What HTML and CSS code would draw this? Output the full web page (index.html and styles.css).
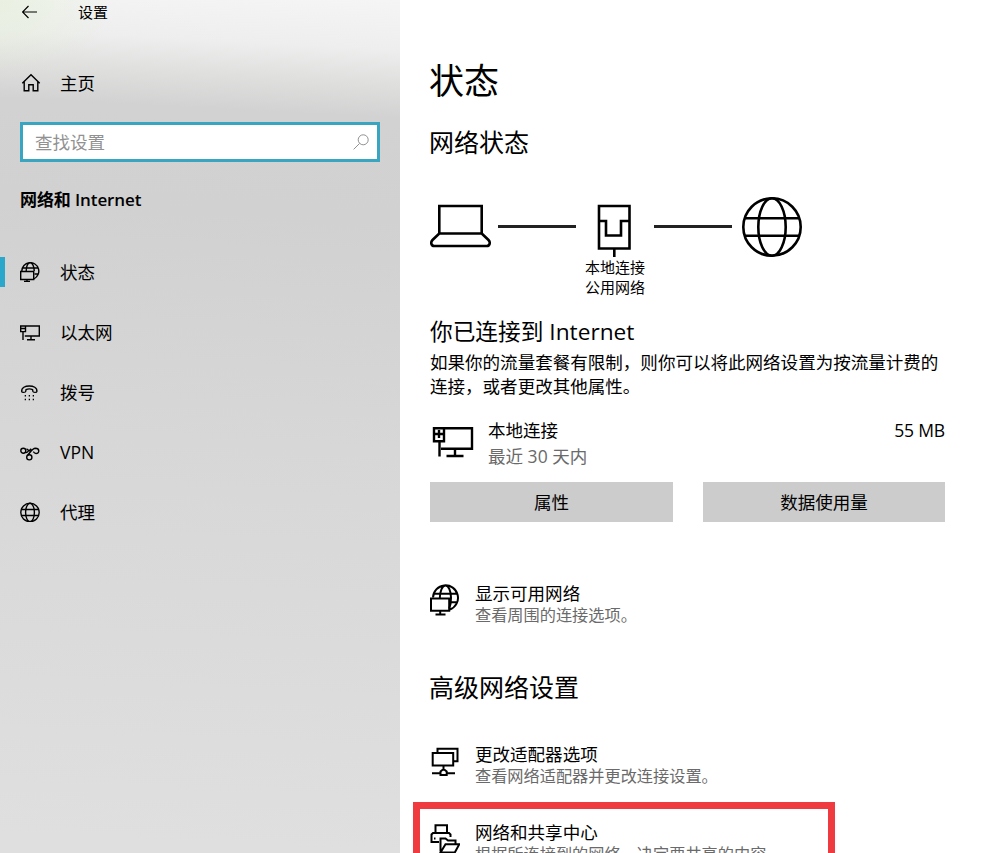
FILE: index.html
```html
<!DOCTYPE html>
<html lang="zh-CN">
<head>
  <meta charset="UTF-8">
  <meta name="viewport" content="width=device-width, initial-scale=1.0">
  <title>设置</title>
  <link rel="stylesheet" href="styles.css">
</head>
<body>
  <aside class="sidebar">
    <header class="titlebar">
      <svg class="back" width="16" height="14" viewBox="0 0 16 14"><path d="M15 7H.5M6.500 1L.5 7l6 6"/></svg>
      <span>设置</span>
    </header>

    <a class="home">
      <svg width="20" height="20" viewBox="0 0 20 20"><path d="M1.300 10.200L10 1.700l8.700 8.500M3.200 8.600v9.200h4.600v-6h4.400v6h4.600V8.600"/></svg>
      <span>主页</span>
    </a>

    <div class="search">
      <span>查找设置</span>
      <svg width="16" height="16" viewBox="0 0 16 16"><circle cx="10.200" cy="5.800" r="5"/><path d="M6.600 9.400L.6 15.400"/></svg>
    </div>

    <h2 class="category">网络和 Internet</h2>

    <nav class="nav">
      <a class="nav-item active">
        <svg width="20" height="20" viewBox="0 0 20 20"><path d="M1.800 9A8.500 8.500 0 1 1 14 16.800M2.500 6h15.600M14.500 12h3.800M6.200 9C6.400 4 8 .8 10.200.8s4 3.600 4 8.200"/><path d="M.7 9.500h13v8H.7zM7 17.500v2.300M4 19.500h6"/></svg>
        <span>状态</span>
      </a>
      <a class="nav-item">
        <svg width="20" height="20" viewBox="0 0 20 20"><path d="M5.500 4h13.800v10H4.800M.7 4h4.800v5.600H.7zM.7 6.500h4.800M3 9.600V18M11 14v3.500M7 17.800h8"/></svg>
        <span>以太网</span>
      </a>
      <a class="nav-item">
        <svg width="20" height="20" viewBox="0 0 20 20"><path d="M1.700 9.500C1.300 5.500 5.300 4 9.300 4s8 1.500 7.600 5.500c-.1 1.200-3.800 1.200-4 0l-.3-1.800c-1.600-.8-5-.8-6.600 0l-.3 1.800c-.2 1.200-3.900 1.200-4 0z"/><path class="dots" d="M4.700 13.700h1.300M8.700 13.700H10M12.700 13.700H14M4.700 17.500h1.300M8.700 17.500H10M12.700 17.500H14"/></svg>
        <span>拨号</span>
      </a>
      <a class="nav-item">
        <svg width="20" height="20" viewBox="0 0 20 20"><circle cx="3.300" cy="8.800" r="2.500"/><circle cx="9.300" cy="15.300" r="2.600"/><path d="M5.300 10.300c1.700 1.200 2.500-.6 3.800-2.200M6.500 6.800l2.700 2 2-2M7.600 13.200c2.400-2 4.200-6.800 7.800-6.900 4.400 0 4.400 5.200.6 5.200-1.200 0-2-.8-2.700-1.800"/></svg>
        <span>VPN</span>
      </a>
      <a class="nav-item">
        <svg width="20" height="20" viewBox="0 0 20 20"><circle cx="10" cy="10.500" r="9.200"/><ellipse cx="10" cy="10.500" rx="4.400" ry="9.200"/><path d="M1.300 7.500h17.400M1.300 13.500h17.400"/></svg>
        <span>代理</span>
      </a>
    </nav>
  </aside>

  <main class="content">
    <h1>状态</h1>
    <h2>网络状态</h2>

    <div class="diagram">
      <svg class="laptop" width="62" height="60" viewBox="0 0 62 60"><path d="M9.300 9h42.400v27.500H9.300zM9.300 36.500L2.500 43c-2.400 2.600-1 6 1.700 6h52.600c2.700 0 4.100-3.400 1.700-6l-6.800-6.500"/></svg>
      <span class="line"></span>
      <div class="adapter">
        <svg width="36" height="60" viewBox="0 0 36 60"><path d="M2 9h30.500v42.500H2zM2 24h7v14.500h15V24h8.500M17.300 51.500V60"/></svg>
        <span>本地连接</span>
        <span>公用网络</span>
      </div>
      <span class="line"></span>
      <svg class="globe" width="60" height="60" viewBox="0 0 60 60"><circle cx="30" cy="30" r="28.700"/><ellipse cx="30" cy="30" rx="13.700" ry="28.700"/><path d="M3 21.300h54M3 38.800h54"/></svg>
    </div>

    <h3>你已连接到 Internet</h3>
    <p class="intro">如果你的流量套餐有限制，则你可以将此网络设置为按流量计费的连接，或者更改其他属性。</p>

    <div class="connection">
      <svg width="42" height="34" viewBox="0 0 42 34"><path d="M12 2.300h28v20.500H9M2 2.300h10v13H2zM2 8h10M7 4v8M7.500 16v14.500M23 23v6.500M14.500 30h17"/></svg>
      <div class="connection-text">
        <span>本地连接</span>
        <span class="muted">最近 30 天内</span>
      </div>
      <span class="usage">55 MB</span>
    </div>

    <div class="buttons">
      <button class="btn">属性</button>
      <button class="btn">数据使用量</button>
    </div>

    <a class="option">
      <svg width="30" height="32" viewBox="0 0 30 32"><path d="M3 13.500a12.500 12.500 0 1 1 17 12M3.700 9.700h23.600M20 18.200h7.200M9.800 14.500C9.800 7 12.500 1.500 15.500 1.500S21 7 21 13.700c0 4-.5 8-1.800 11"/><path d="M1 14.500h18.200v12.300H1zM10.200 27v4M5.500 30.500h10"/></svg>
      <div class="option-text">
        <span>显示可用网络</span>
        <small>查看周围的连接选项。</small>
      </div>
    </a>

    <h2 class="advanced">高级网络设置</h2>

    <a class="option">
      <svg width="30" height="32" viewBox="0 0 30 32"><path d="M7.500 7.500V3.700h20v12.500h-4M2.700 8h20.500v12.500H2.700zM13.500 20.500V24M2 28.300h8.200M17 28.300h8M10.500 26.500l3-2.500 3.200 2.500V30h-6.200z"/></svg>
      <div class="option-text">
        <span>更改适配器选项</span>
        <small>查看网络适配器并更改连接设置。</small>
      </div>
    </a>
    <a class="option sharing">
      <svg width="30" height="32" viewBox="0 0 30 32"><path d="M5.500 10V2.300h11.500V10M9 19H1.500v-7.500L3 10h16l1.500 1.500V14M4 15.500h1.500M10.500 28.500v-13h5l2.500 2h7.500V21M10.500 29.500l5-8.200h13.800l-4.500 8.200z"/></svg>
      <div class="option-text">
        <span>网络和共享中心</span>
        <small>根据所连接到的网络，决定要共享的内容。</small>
      </div>
    </a>
    <div class="highlight"></div>
  </main>
</body>
</html>
```
FILE: styles.css
```css
* {
  box-sizing: border-box;
}
body {
  display: flex;
  height: 853px;
  margin: 0;
  overflow: hidden;
  background: #fff;
  color: #000;
  font-family: "Open Sans", "Noto Sans CJK SC", sans-serif;
  font-size: 17.55px;
  line-height: 24px;
}
h1, h2, h3, p {
  margin: 0;
  font-weight: normal;
}
svg {
  flex: none;
  fill: none;
  stroke: #000;
  stroke-width: 1.4;
}

/* sidebar */
.sidebar {
  width: 400px;
  flex: none;
  background:
    radial-gradient(ellipse 110px 80px at 0 0, rgba(226, 240, 210, 0.5), transparent),
    linear-gradient(183deg, #f4f5f4 0, #edeeed 50px, #e0e0df 82px, #d2d2d2 118px, #d1d1d1 220px, #d7d7d7 450px, #dfdfdf 853px);
}
.titlebar {
  display: flex;
  align-items: center;
  height: 24px;
  padding-left: 22px;
  font-size: 15px;
}
.titlebar svg {
  stroke-width: 1.2;
  margin-right: 40px;
}
.home {
  display: flex;
  align-items: center;
  height: 40px;
  margin-top: 39px;
  padding-left: 21px;
  gap: 19px;
}
.search {
  display: flex;
  align-items: center;
  justify-content: space-between;
  height: 40px;
  margin: 19px 20px 0;
  padding: 0 8px 0 12px;
  border: 3px solid #39a5c0;
  background: #fff;
  color: #919191;
}
.search svg {
  stroke: #919191;
  stroke-width: 1;
}
.category {
  margin: 26px 0 0 20px;
  font-size: 17px;
  font-weight: 600;
  line-height: 24px;
  letter-spacing: -0.1px;
}
.nav {
  margin-top: 30px;
}
.nav-item {
  display: flex;
  align-items: center;
  height: 60px;
  padding-left: 20px;
  gap: 20px;
}
.nav-item.active {
  background: linear-gradient(#2aa7cb, #2aa7cb) 0 50% / 5px 30px no-repeat;
}
.dots {
  stroke-width: 1.5;
}

/* content */
.content {
  position: relative;
  flex: 1;
  padding: 57px 40px 0 30px;
  overflow: hidden;
}
h1 {
  margin-left: -1px;
  font-size: 35px;
  line-height: 48px;
}
h2 {
  font-size: 25px;
  line-height: 34px;
}
.content h2 {
  margin: 20px 0 0 -1px;
}
.diagram {
  display: flex;
  height: 103px;
  margin-top: 38px;
}
.diagram svg {
  stroke-width: 2.6;
}
.line {
  width: 78px;
  height: 3px;
  margin-top: 28px;
  background: #222;
}
.laptop {
  margin-right: 6px;
}
.adapter {
  display: flex;
  flex-direction: column;
  align-items: center;
  width: 78px;
  font-size: 15px;
  line-height: 20px;
}
.globe {
  margin-left: 10px;
}
h3 {
  margin-top: 16px;
  font-size: 22.7px;
  line-height: 32px;
}
.intro {
  margin-top: 2px;
}
.connection {
  display: flex;
  margin-top: 19px;
}
.connection svg {
  margin: 9px 14px 0 2px;
  stroke-width: 2.4;
}
.connection-text {
  display: flex;
  flex-direction: column;
  line-height: 26px;
}
.muted, small {
  color: #6a6a6a;
}
.usage {
  margin-left: auto;
  line-height: 26px;
  letter-spacing: -0.2px;
}
.buttons {
  display: grid;
  grid-template-columns: 243px 242px;
  gap: 30px;
  margin-top: 13px;
}
.btn {
  height: 40px;
  padding: 0;
  border: none;
  background: #ccc;
  color: #000;
  font: inherit;
}
.option {
  display: flex;
  gap: 15px;
  margin-top: 60px;
}
.option svg {
  margin-top: 2px;
  stroke-width: 2;
}
.option-text {
  display: flex;
  flex-direction: column;
  white-space: nowrap;
}
.option-text span, .option-text small {
  line-height: 22px;
}
.option-text small {
  font-size: 16.2px;
}
.content .advanced {
  margin-top: 44px;
}
.advanced + .option {
  margin-top: 39px;
}
.option.sharing {
  margin-top: 34px;
}
.highlight {
  position: absolute;
  top: 802px;
  left: 13px;
  width: 422px;
  height: 80px;
  border: 7px solid #ef3b3f;
}
```
